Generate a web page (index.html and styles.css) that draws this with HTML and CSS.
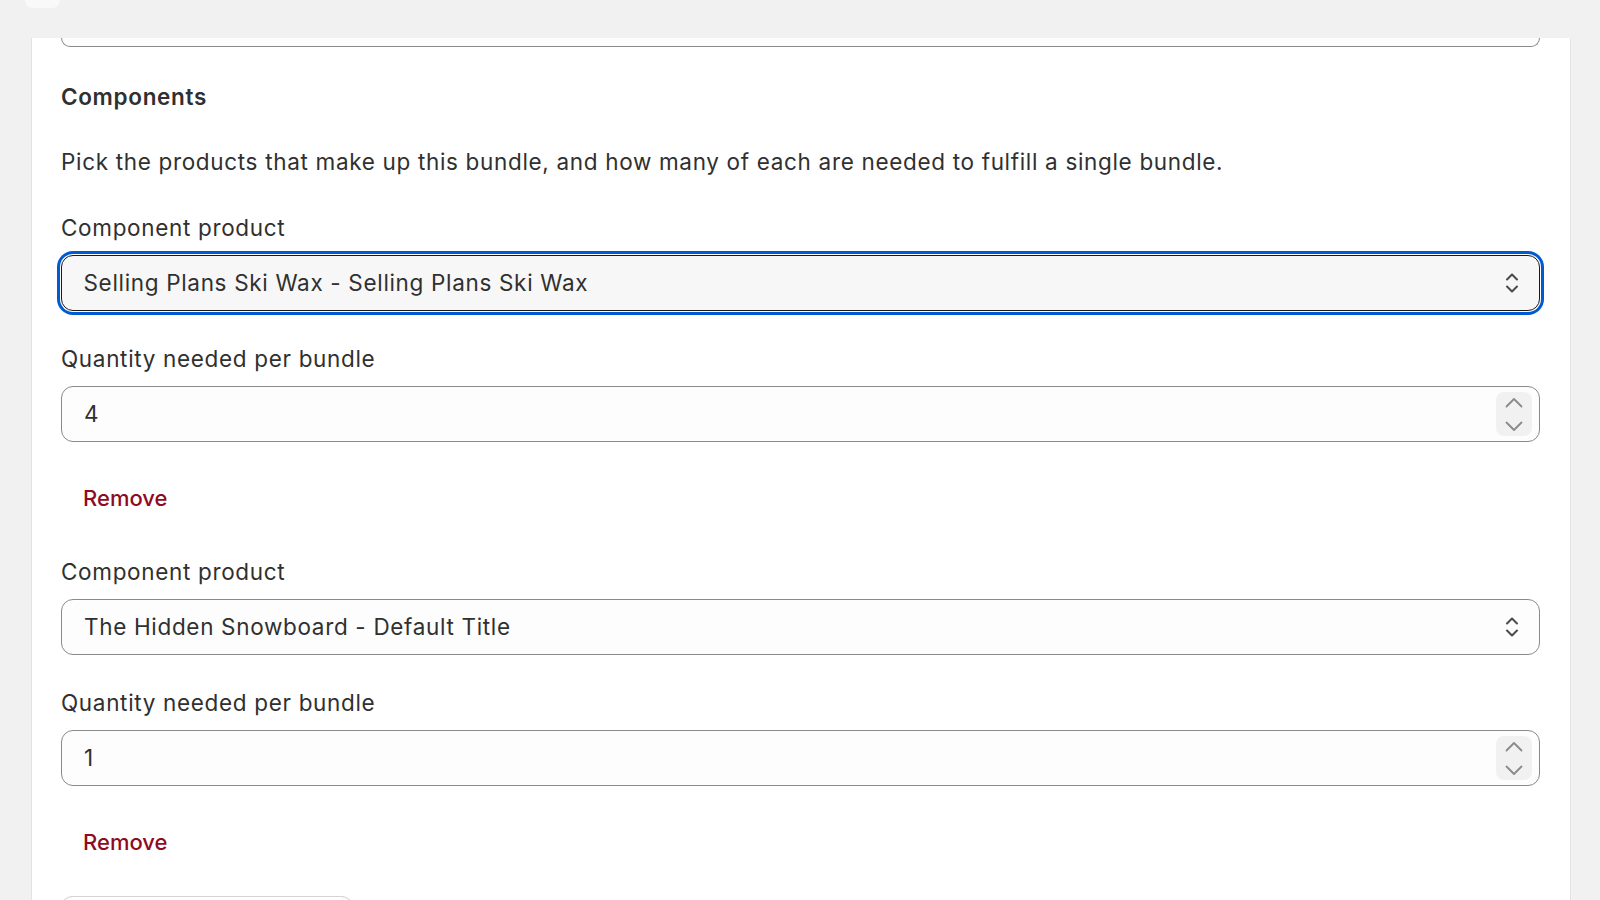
FILE: index.html
```html
<!DOCTYPE html>
<html lang="en">
<head>
  <meta charset="UTF-8" />
  <meta name="viewport" content="width=device-width, initial-scale=1.0"/>
  <title>New bundle</title>
  <link rel="stylesheet" href="styles.css">
</head>
<body>

  <div class="topbar">
    <button class="back-btn" aria-label="Back"></button>
    <h1 class="page-title">New bundle</h1>
  </div>

  <div class="page">
    <div class="card">
      <!-- bottom edge of the bundle title field, scrolled under the top bar -->
      <div class="field-tail"></div>

      <h2 class="section-title">Components</h2>
      <p class="section-help">Pick the products that make up this bundle, and how many of each are needed to fulfill a single bundle.</p>

      <div class="component-list">
        <div class="component">
          <div class="field">
            <label class="field-label">Component product</label>
            <div class="control select focused">
              <span class="control-value">Selling Plans Ski Wax - Selling Plans Ski Wax</span>
              <svg class="select-icon" width="14" height="24" viewBox="0 0 14 24"><path d="M2 8.5 7 3.5l5 5M2 15.5l5 5 5-5" fill="none" stroke="#4a4a4a" stroke-width="2" stroke-linecap="round" stroke-linejoin="round"/></svg>
            </div>
          </div>
          <div class="field">
            <label class="field-label">Quantity needed per bundle</label>
            <div class="control number">
              <span class="control-value">4</span>
              <span class="spinner">
                <svg width="18" height="11" viewBox="0 0 18 11"><path d="M1.5 9.5 9 2l7.5 7.5" fill="none" stroke="#8a8a8a" stroke-width="1.8" stroke-linecap="round" stroke-linejoin="round"/></svg>
                <svg width="18" height="11" viewBox="0 0 18 11"><path d="M1.5 1.5 9 9l7.5-7.5" fill="none" stroke="#8a8a8a" stroke-width="1.8" stroke-linecap="round" stroke-linejoin="round"/></svg>
              </span>
            </div>
          </div>
          <button class="btn-remove">Remove</button>
        </div>

        <div class="component">
          <div class="field">
            <label class="field-label">Component product</label>
            <div class="control select">
              <span class="control-value">The Hidden Snowboard - Default Title</span>
              <svg class="select-icon" width="14" height="24" viewBox="0 0 14 24"><path d="M2 8.5 7 3.5l5 5M2 15.5l5 5 5-5" fill="none" stroke="#4a4a4a" stroke-width="2" stroke-linecap="round" stroke-linejoin="round"/></svg>
            </div>
          </div>
          <div class="field">
            <label class="field-label">Quantity needed per bundle</label>
            <div class="control number">
              <span class="control-value">1</span>
              <span class="spinner">
                <svg width="18" height="11" viewBox="0 0 18 11"><path d="M1.5 9.5 9 2l7.5 7.5" fill="none" stroke="#8a8a8a" stroke-width="1.8" stroke-linecap="round" stroke-linejoin="round"/></svg>
                <svg width="18" height="11" viewBox="0 0 18 11"><path d="M1.5 1.5 9 9l7.5-7.5" fill="none" stroke="#8a8a8a" stroke-width="1.8" stroke-linecap="round" stroke-linejoin="round"/></svg>
              </span>
            </div>
          </div>
          <button class="btn-remove">Remove</button>
        </div>
      </div>

      <button class="btn-add">Add component</button>
    </div>
  </div>

</body>
</html>
```

FILE: styles.css
```css
html, body {
  height: 100%;
  overflow: hidden;
}
body {
  margin: 0;
  font-family: Inter, "Noto Sans", sans-serif;
  font-size: 22.5px;
  line-height: 28px;
  letter-spacing: 0.67px;
  color: #303030;
  background-color: #f1f1f1;
}
.topbar {
  height: 38px;
  display: flex;
  align-items: flex-start;
  padding-left: 25px;
  overflow: hidden;
  background-color: #f1f1f1;
}
.back-btn {
  width: 35px;
  height: 8px;
  border: none;
  padding: 0;
  border-radius: 0 0 8px 8px;
  background-color: #f9f9f9;
}
.page-title {
  margin: -32px 0 0 166px;
  font-size: 30px;
  line-height: 36px;
  font-weight: 700;
  letter-spacing: 0.5px;
}
.page {
  padding: 0 30px 0 32px;
}
.card {
  background-color: #fff;
  padding: 0 30px 40px 29px;
  box-shadow: -1px 0 0 #e3e3e3, 1px 0 0 #e3e3e3;
}
.field-tail {
  height: 8px;
  border: 1px solid #8a8a8a;
  border-top: none;
  border-radius: 0 0 12px 12px;
  background-color: #fdfdfd;
}
.section-title {
  margin: 36px 0 0;
  font-size: 22.5px;
  line-height: 28px;
  font-weight: 600;
}
.section-help {
  margin: 37px 0 0;
}
.component-list {
  margin-top: 38px;
  display: flex;
  flex-direction: column;
  gap: 38px;
}
.component {
  display: flex;
  flex-direction: column;
  align-items: flex-start;
}
.field {
  align-self: stretch;
  display: flex;
  flex-direction: column;
  gap: 13px;
}
.field + .field {
  margin-top: 34px;
}
.control {
  height: 56px;
  box-sizing: border-box;
  display: flex;
  align-items: center;
  padding: 0 7px 0 22px;
  border: 1px solid #8a8a8a;
  border-radius: 12px;
  background-color: #fdfdfd;
}
.control-value {
  flex: 1;
}
.select.focused {
  border: 1.5px solid #1a1a1a;
  background-color: #f7f7f7;
  box-shadow: 0 0 0 1px #fff, 0 0 0 4px #005bd3;
  padding-left: 21.5px;
}
.select-icon {
  margin-right: 13px;
}
.spinner {
  width: 36px;
  height: 44px;
  box-sizing: border-box;
  margin-top: -1px;
  padding: 5px 0 4px;
  border-radius: 8px;
  background-color: #f1f1f1;
  display: flex;
  flex-direction: column;
  align-items: center;
  justify-content: space-between;
}
.btn-remove {
  margin-top: 34px;
  height: 44px;
  padding: 0 22px;
  border: none;
  background: none;
  font-family: inherit;
  font-size: 22px;
  font-weight: 550;
  letter-spacing: 0;
  color: #8e0b21;
  cursor: pointer;
}
.btn-add {
  margin-top: 33px;
  height: 48px;
  padding: 0 56px;
  border: none;
  border-radius: 12px;
  background-color: #fff;
  box-shadow: 0 -1px 0 #d4d4d4, 0 0 0 1px #e3e3e3;
  font-family: inherit;
  font-size: 22.5px;
  font-weight: 550;
  letter-spacing: inherit;
  color: #303030;
}
```
